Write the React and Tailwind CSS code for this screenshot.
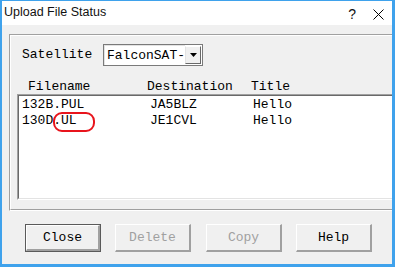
import React from "react"

const mono = { fontFamily: '"Liberation Mono", "Courier New", monospace' }

const rows = [
  { name: "132B.PUL", dest: "JA5BLZ", title: "Hello" },
  { name: "130D.UL", dest: "JE1CVL", title: "Hello" },
]

function WinButton({ label, disabled, isDefault, className = "" }) {
  const inner = (
    <div
      className={`flex h-full w-full items-center justify-center border-t border-l border-t-white border-l-white border-b-2 border-r-2 border-b-[#a0a0a0] border-r-[#a0a0a0] bg-[#f0f0f0] text-[13px] ${
        disabled ? "text-[#a0a0a0]" : "text-black"
      }`}
    >
      {label}
    </div>
  )
  if (isDefault) {
    return (
      <div className={`h-[28px] w-[76px] border border-[#5a5a5a] ${className}`}>{inner}</div>
    )
  }
  return <div className={`h-[28px] w-[76px] ${className}`}>{inner}</div>
}

export default function App() {
  return (
    <div className="h-[267px] w-[395px] bg-[#3fa2ec] pt-px pl-[2px] pr-[3px] pb-[3px]">
      <div className="flex h-full w-full flex-col overflow-hidden bg-[#f0f0f0]">
        {/* title bar */}
        <div
          className="flex h-[24px] shrink-0 items-center bg-white pl-[2px] pr-[8px] text-[12.5px] text-[#111]"
          style={{ fontFamily: '"Liberation Sans", Arial, sans-serif' }}
        >
          <span className="mt-[-1px]">Upload File Status</span>
          <span className="ml-auto mt-[2px] text-[14px]">?</span>
          <svg className="ml-[17px] mt-[3px]" width="11" height="11" viewBox="0 0 11 11">
            <path d="M0.5 0.5 L10.5 10.5 M10.5 0.5 L0.5 10.5" stroke="#000" strokeWidth="1" fill="none" />
          </svg>
        </div>

        {/* group box */}
        <div className="ml-[7px] mt-[9px] h-[177px] shrink-0 border-t border-l border-b border-t-[#a0a0a0] border-l-[#a0a0a0] border-b-white">
          <div className="h-full border-t border-l border-b border-t-white border-l-white border-b-[#a0a0a0]" style={mono}>
            <div className="mt-[8px] flex h-[22px] items-center">
              <span className="ml-[11px] w-[81px] text-[13px] text-black">Satellite</span>
              <div className="flex h-[22px] w-[100px] items-center border border-[#7a7a7a] bg-white">
                <div className="h-full flex-1 border-t border-l border-[#e3e3e3] pl-[2px] text-[13px] leading-[19px] text-black">
                  FalconSAT-
                </div>
                <div className="mr-px flex h-[18px] w-[16px] items-center justify-center border-t border-l border-t-white border-l-[#e3e3e3] border-b border-r border-b-[#696969] border-r-[#696969] bg-[#f0f0f0]">
                  <svg width="7" height="4" viewBox="0 0 7 4">
                    <path d="M0 0 H7 L3.5 4 Z" fill="#000" />
                  </svg>
                </div>
              </div>
            </div>

            <div className="ml-[6px] mt-[13px] flex h-[15px] pl-[11px] text-[13px] leading-[15px] text-black">
              <span className="w-[119px]">Filename</span>
              <span className="w-[104px]">Destination</span>
              <span>Title</span>
            </div>

            <div className="relative ml-[6px] h-[106px] border-t border-l border-b border-t-[#a0a0a0] border-l-[#a0a0a0] border-b-white">
              <div className="h-full border-t border-l border-b border-t-[#696969] border-l-[#696969] border-b-[#e3e3e3] bg-white pt-px pl-[3px]">
                {rows.map((r) => (
                  <div key={r.name} className="flex h-[16px] text-[13px] leading-[16px] text-black">
                    <span className="w-[128px]">{r.name}</span>
                    <span className="w-[103px]">{r.dest}</span>
                    <span>{r.title}</span>
                  </div>
                ))}
              </div>
              <div className="absolute left-[35px] top-[17px] h-[20px] w-[42px] rounded-[9px] border-2 border-[#e8141c]" />
            </div>
          </div>
        </div>

        {/* buttons */}
        <div className="ml-[23px] mt-[13px] flex gap-[14px]" style={mono}>
          <WinButton label="Close" isDefault />
          <WinButton label="Delete" disabled />
          <WinButton label="Copy" disabled className="ml-px" />
          <WinButton label="Help" />
        </div>
      </div>
    </div>
  )
}
